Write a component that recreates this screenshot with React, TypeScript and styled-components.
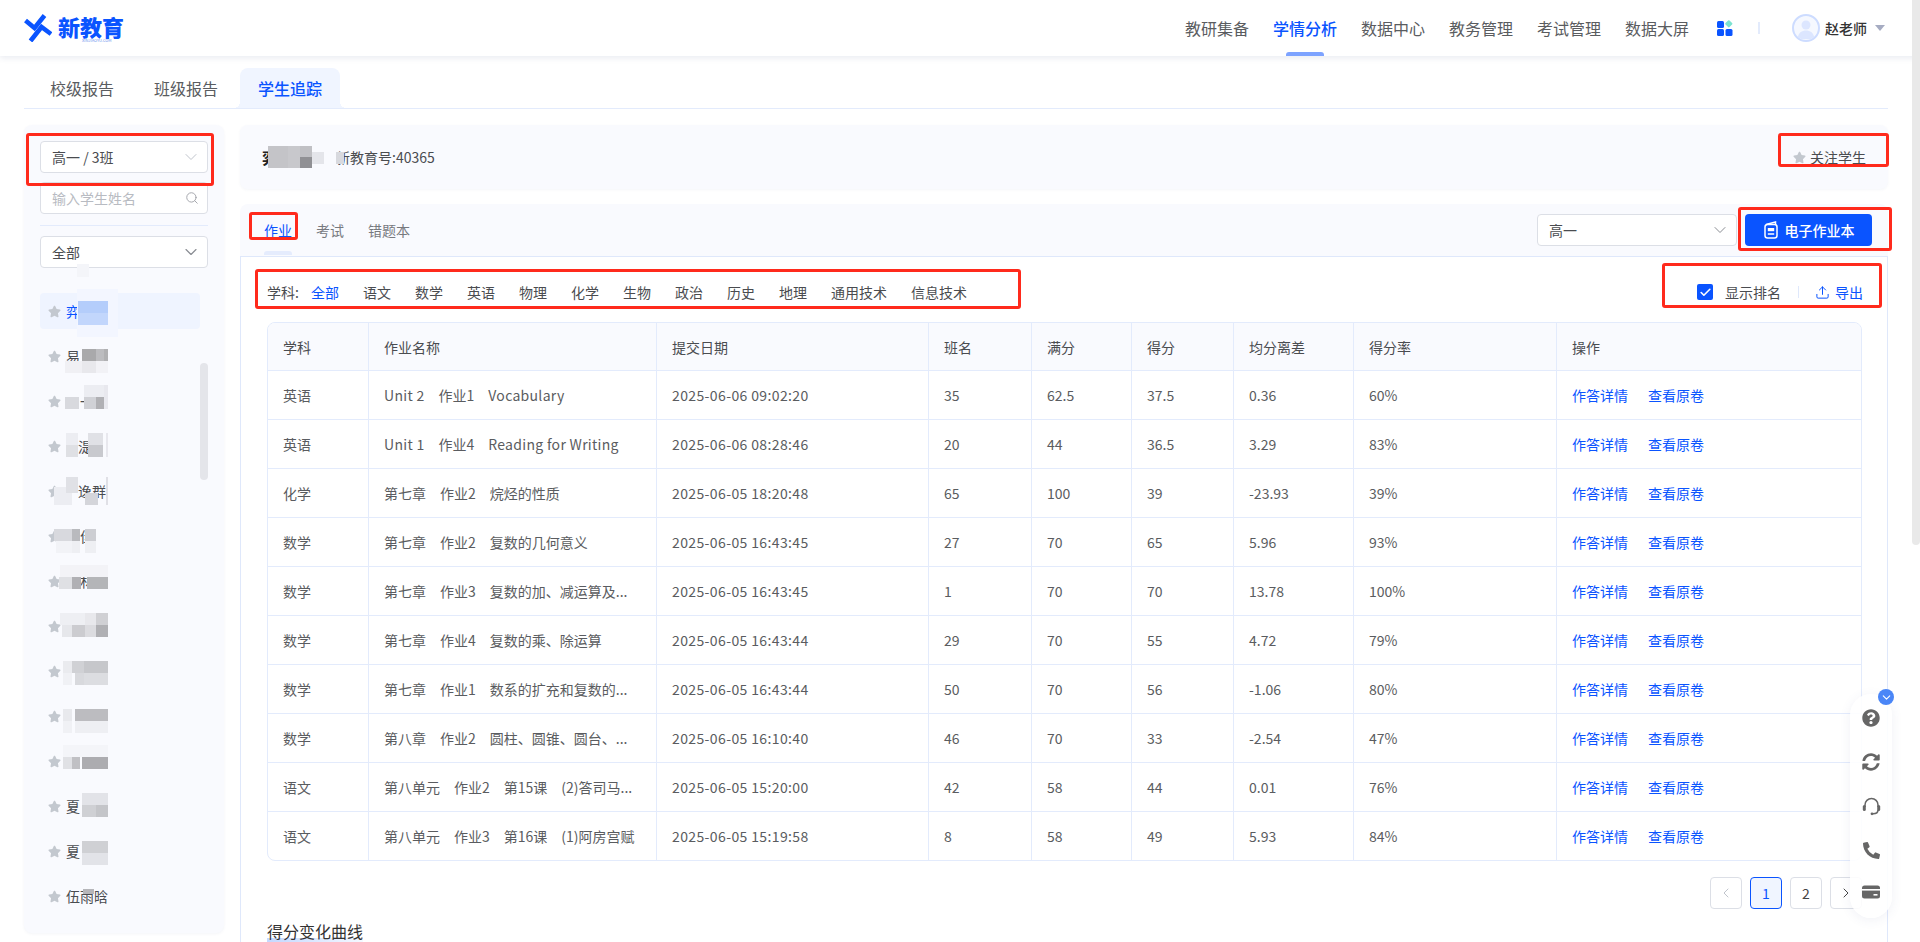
import React from 'react';
import styled, { createGlobalStyle } from 'styled-components';
import { Check, ChevronDown, ChevronLeft, ChevronRight, Search, Upload } from 'lucide-react';
import { FaPhoneAlt, FaQuestionCircle, FaStar, FaSyncAlt } from 'react-icons/fa';

const BLUE = '#0a54ff';
const LINE = '#e3ebfc';
const PANEL = '#f9fafe';
const TEXT = '#5a5c60';

const GlobalStyle = createGlobalStyle`
	html, body {
		margin: 0;
		padding: 0;
		height: 942px;
		overflow: hidden;
		background: #fff;
		font-family: "Noto Sans CJK SC", "Noto Sans", sans-serif;
		font-size: 14px;
		color: ${TEXT};
	}
	* {
		box-sizing: border-box;
	}
`;

const Page = styled.div`
	position: relative;
	width: 1920px;
	height: 942px;
	overflow: hidden;
`;

const Header = styled.header`
	display: flex;
	align-items: center;
	height: 56px;
	padding: 0 35px 0 24px;
	background: #fff;
	box-shadow: 0 2px 6px rgba(40, 60, 120, 0.1);
`;

const Logo = styled.div`
	position: relative;
	display: flex;
	align-items: center;
	gap: 6px;
	height: 56px;
`;

const LogoWord = styled.span`
	margin-bottom: 4px;
	font-size: 22px;
	font-weight: 900;
	line-height: 22px;
	color: ${BLUE};
`;

const LogoSmall = styled.span`
	position: absolute;
	left: 58px;
	top: 38px;
	font-size: 4px;
	line-height: 4px;
	color: #6d93ee;
	white-space: nowrap;
`;

const Nav = styled.nav`
	display: flex;
	align-items: center;
	gap: 24px;
	margin-left: auto;
	height: 56px;
`;

const NavItem = styled.a<{ $active?: boolean }>`
	position: relative;
	display: flex;
	align-items: center;
	height: 56px;
	font-size: 16px;
	font-weight: ${(p) => (p.$active ? 500 : 400)};
	color: ${(p) => (p.$active ? BLUE : TEXT)};

	&::after {
		content: '';
		display: ${(p) => (p.$active ? 'block' : 'none')};
		position: absolute;
		left: 13px;
		bottom: 0;
		width: 38px;
		height: 4px;
		border-radius: 3px 3px 0 0;
		background: #7da3ff;
	}
`;

const HeaderRight = styled.div`
	display: flex;
	align-items: center;
	margin-left: 28px;
`;

const HeaderDivider = styled.span`
	width: 2px;
	height: 12px;
	margin: 0 32px 0 25px;
	background: ${LINE};
`;

const Avatar = styled.span`
	display: flex;
	align-items: center;
	justify-content: center;
	width: 28px;
	height: 28px;
	border-radius: 50%;
	border: 2px solid #cddcff;
	background: #f5f8ff;
	overflow: hidden;
`;

const UserName = styled.span`
	margin-left: 5px;
	font-weight: 500;
	font-size: 14px;
	color: #333;
`;

const Caret = styled.span`
	width: 0;
	height: 0;
	margin-left: 8px;
	border-left: 5px solid transparent;
	border-right: 5px solid transparent;
	border-top: 6px solid #a6acc2;
`;

const Main = styled.main`
	padding: 0 32px 0 24px;
`;

const ReportTabs = styled.div`
	display: flex;
	gap: 4px;
	height: 53px;
	padding: 12px 0 0 8px;
	border-bottom: 1px solid ${LINE};
`;

const ReportTab = styled.a<{ $active?: boolean }>`
	position: relative;
	display: flex;
	align-items: center;
	justify-content: center;
	width: 100px;
	height: 40px;
	font-size: 16px;
	border-radius: 8px 8px 0 0;
	color: ${(p) => (p.$active ? BLUE : TEXT)};
	font-weight: ${(p) => (p.$active ? 500 : 400)};
	background: ${(p) => (p.$active ? '#f0f5ff' : 'transparent')};

	&::before,
	&::after {
		content: '';
		display: ${(p) => (p.$active ? 'block' : 'none')};
		position: absolute;
		bottom: 0;
		width: 6px;
		height: 6px;
	}

	&::before {
		left: -6px;
		background: radial-gradient(circle at 0 0, transparent 6px, #f0f5ff 6px);
	}

	&::after {
		right: -6px;
		background: radial-gradient(circle at 100% 0, transparent 6px, #f0f5ff 6px);
	}
`;

const Body = styled.div`
	display: flex;
	gap: 16px;
	margin-top: 16px;
`;

const Sidebar = styled.aside`
	position: relative;
	flex: 0 0 200px;
	min-width: 0;
	height: 808px;
	padding: 16px;
	border-radius: 8px;
	background: ${PANEL};
	box-shadow: 0 1px 3px rgba(60, 80, 140, 0.06);
`;

const Select = styled.div<{ $w?: number; $muted?: boolean }>`
	display: flex;
	align-items: center;
	justify-content: space-between;
	width: ${(p) => (p.$w ? `${p.$w}px` : '100%')};
	height: 32px;
	padding: 0 6px 0 11px;
	background: #fff;
	border: 1px solid #dcdfe6;
	border-radius: 4px;
	color: #4a4c50;

	svg {
		color: ${(p) => (p.$muted ? '#c0c4cc' : '#8a8d93')};
	}
`;

const SearchBox = styled.label`
	display: flex;
	align-items: center;
	height: 32px;
	margin-top: 9px;
	padding: 0 8px 0 11px;
	background: #fff;
	border: 1px solid #dcdfe6;
	border-radius: 4px;

	svg {
		color: #9a9da3;
		flex: none;
	}
`;

const SearchInput = styled.input`
	flex: 1;
	width: 0;
	min-width: 0;
	border: 0;
	outline: 0;
	padding: 0;
	font: inherit;
	background: transparent;

	&::placeholder {
		color: #b8bbc2;
	}
`;

const SideDivider = styled.div`
	height: 1px;
	margin: 11px 0 10px;
	background: ${LINE};
`;

const StudentList = styled.ul`
	list-style: none;
	margin: 25px 0 0;
	padding: 0;
	width: 160px;
`;

const StudentRow = styled.li<{ $active?: boolean }>`
	position: relative;
	display: flex;
	align-items: center;
	height: 36px;
	margin-bottom: 9px;
	padding-left: 8px;
	border-radius: 4px;
	color: ${(p) => (p.$active ? BLUE : '#4a4c50')};
	background: ${(p) => (p.$active ? '#eff4ff' : 'transparent')};

	> svg {
		flex: none;
		color: #c3c8cf;
	}
`;

const StudentName = styled.span<{ $indent?: number }>`
	margin-left: ${(p) => 5 + (p.$indent ?? 0)}px;
`;

const Mosaic = styled.i<{ $l: number; $t: number; $w: number; $h: number; $c: string }>`
	position: absolute;
	left: ${(p) => p.$l}px;
	top: ${(p) => p.$t}px;
	width: ${(p) => p.$w}px;
	height: ${(p) => p.$h}px;
	background: ${(p) => p.$c};
`;

const ListScroll = styled.div`
	position: absolute;
	left: 176px;
	top: 238px;
	width: 8px;
	height: 117px;
	border-radius: 4px;
	background: #e4e5ea;
`;

const Content = styled.section`
	flex: 1;
	min-width: 0;
`;

const StudentPanel = styled.div`
	position: relative;
	display: flex;
	align-items: center;
	height: 64px;
	padding: 0 22px;
	border-radius: 8px;
	background: ${PANEL};
	box-shadow: 0 1px 3px rgba(60, 80, 140, 0.05);
`;

const PanelName = styled.strong`
	font-size: 16px;
	font-weight: 700;
	color: #222;
`;

const PanelNo = styled.span`
	margin-left: 58px;
	color: #4a4c50;
`;

const Follow = styled.span`
	display: flex;
	align-items: center;
	gap: 4px;
	margin-left: auto;
	color: #4a4c50;

	svg {
		color: #c3c8cf;
	}
`;

const ToolBar = styled.div`
	display: flex;
	align-items: center;
	height: 52px;
	margin-top: 15px;
	padding: 0 16px 0 24px;
	border-radius: 8px 8px 0 0;
	background: ${PANEL};
`;

const RecordTab = styled.a<{ $active?: boolean }>`
	position: relative;
	margin-right: 24px;
	color: ${(p) => (p.$active ? BLUE : '#77797e')};

	&::after {
		content: '';
		display: ${(p) => (p.$active ? 'block' : 'none')};
		position: absolute;
		left: 0;
		right: 0;
		bottom: -15px;
		height: 4px;
		border-radius: 3px 3px 0 0;
		background: #e5ecfd;
	}
`;

const ToolRight = styled.div`
	display: flex;
	align-items: center;
	gap: 8px;
	margin-left: auto;
`;

const PrimaryButton = styled.button`
	display: flex;
	align-items: center;
	justify-content: center;
	gap: 6px;
	width: 127px;
	height: 32px;
	padding: 0;
	border: 0;
	border-radius: 4px;
	font: inherit;
	font-weight: 500;
	color: #fff;
	background: ${BLUE};
`;

const Box = styled.div`
	height: 700px;
	padding: 0 25px 0 26px;
	background: #fff;
	border: 1px solid #dfe8fb;
`;

const FilterBar = styled.div`
	display: flex;
	align-items: center;
	height: 65px;
	padding-top: 5px;
`;

const FilterLabel = styled.span`
	margin-right: 12px;
	color: #4a4c50;
`;

const FilterItem = styled.a<{ $active?: boolean }>`
	margin-right: 24px;
	color: ${(p) => (p.$active ? BLUE : '#4a4c50')};
`;

const FilterRight = styled.div`
	display: flex;
	align-items: center;
	margin-left: auto;
	margin-right: -1px;
`;

const CheckBox = styled.span`
	display: flex;
	align-items: center;
	justify-content: center;
	width: 16px;
	height: 16px;
	border-radius: 2px;
	background: ${BLUE};
	color: #fff;
`;

const CheckLabel = styled.span`
	margin-left: 12px;
	color: #4a4c50;
`;

const FilterDivider = styled.span`
	width: 1px;
	height: 12px;
	margin: 0 16px 0 17px;
	background: #dfe8fb;
`;

const ExportLink = styled.a`
	display: flex;
	align-items: center;
	gap: 5px;
	color: ${BLUE};
`;

const TableWrap = styled.div`
	border: 1px solid ${LINE};
	border-radius: 8px;
	overflow: hidden;
`;

const Table = styled.table`
	width: 100%;
	table-layout: fixed;
	border-collapse: separate;
	border-spacing: 0;
`;

const HeadCell = styled.th`
	height: 48px;
	padding: 0 0 0 15px;
	text-align: left;
	font-weight: 400;
	background: ${PANEL};
	color: #4a4c50;
	border-bottom: 1px solid ${LINE};
	border-right: 1px solid ${LINE};

	&:last-child {
		border-right: 0;
	}
`;

const Cell = styled.td<{ $spaced?: boolean }>`
	height: 49px;
	padding: 0 0 0 15px;
	white-space: nowrap;
	overflow: hidden;
	color: ${TEXT};
	letter-spacing: ${(p) => (p.$spaced ? '0.38px' : 'normal')};
	border-bottom: 1px solid ${LINE};
	border-right: 1px solid ${LINE};

	tr:last-child > & {
		height: 48px;
		border-bottom: 0;
	}

	&:last-child {
		border-right: 0;
	}
`;

const TitlePart = styled.span<{ $latin?: boolean }>`
	margin-right: 14px;
	letter-spacing: ${(p) => (p.$latin ? '0.3px' : 'normal')};
`;

const ActionLink = styled.a`
	margin-right: 20px;
	color: ${BLUE};
`;

const Pager = styled.div`
	display: flex;
	justify-content: flex-end;
	gap: 8px;
	margin-top: 16px;
`;

const PageButton = styled.span<{ $active?: boolean; $disabled?: boolean }>`
	display: flex;
	align-items: center;
	justify-content: center;
	width: 32px;
	height: 32px;
	border-radius: 4px;
	border: 1px solid ${(p) => (p.$active ? BLUE : '#dcdfe6')};
	background: ${(p) => (p.$active ? '#f0f5ff' : '#fff')};
	color: ${(p) => (p.$active ? BLUE : p.$disabled ? '#c0c4cc' : '#444')};
`;

const CurveTitle = styled.h3`
	position: relative;
	display: inline-block;
	margin: 10px 0 0;
	font-size: 16px;
	font-weight: 400;
	line-height: 24px;
	color: #333;
	background: linear-gradient(90deg, #c4d8ff, #f4f8ff) no-repeat 0 100% / 100% 8px;
	padding-bottom: 3px;
`;

const SideScrollbar = styled.div`
	position: absolute;
	right: 0;
	top: 0;
	width: 8px;
	height: 545px;
	border-radius: 0 0 4px 4px;
	background: #e9e9e9;
`;

const FloatBar = styled.div`
	position: absolute;
	left: 1850px;
	top: 694px;
	display: flex;
	flex-direction: column;
	align-items: center;
	gap: 26px;
	width: 42px;
	height: 224px;
	padding-top: 15px;
	border-radius: 21px;
	background: rgba(255, 255, 255, 0.88);
	box-shadow: 0 2px 12px rgba(60, 80, 140, 0.08);
	color: #666;
`;

const FloatBadge = styled.span`
	position: absolute;
	right: -2px;
	top: -5px;
	display: flex;
	align-items: center;
	justify-content: center;
	width: 16px;
	height: 16px;
	border-radius: 50%;
	background: #4a86f7;
	color: #fff;
`;

const Annotation = styled.div<{ $l: number; $t: number; $w: number; $h: number }>`
	position: absolute;
	left: ${(p) => p.$l}px;
	top: ${(p) => p.$t}px;
	width: ${(p) => p.$w}px;
	height: ${(p) => p.$h}px;
	border: 3px solid #ff2a1c;
	border-radius: 3px;
	pointer-events: none;
`;

type Tile = [number, number, number, number, string];

// page coordinates of the blurred patches, per list row: x0, x1, y0, y1, colour
const students: { name: string; indent?: number; tiles: Tile[] }[] = [
	{
		name: '弈',
		tiles: [
			[77, 89, 263, 276, '#f4f5f9'],
			[77, 118, 288, 336, '#f3f6ff'],
			[78, 108, 300, 312, '#b4cdfb'],
			[78, 108, 312, 324, '#c2d6fc']
		]
	},
	{
		name: '易',
		tiles: [
			[82, 96, 348, 360, '#a9a9ab'],
			[96, 104, 348, 360, '#bcbcbf'],
			[104, 108, 348, 360, '#b0b0b2'],
			[65, 82, 360, 372, '#f0f0f4'],
			[82, 96, 360, 372, '#e8e8ec'],
			[96, 108, 360, 372, '#f2f2f6']
		]
	},
	{
		name: '一',
		indent: 14,
		tiles: [
			[84, 104, 384, 396, '#ecedf2'],
			[65, 79, 396, 408, '#d8d9de'],
			[84, 96, 396, 408, '#d0d1d6'],
			[96, 104, 396, 408, '#b0b0b4'],
			[104, 108, 384, 408, '#e8e8ee']
		]
	},
	{
		name: '湜',
		indent: 12,
		tiles: [
			[66, 78, 432, 444, '#ecedf2'],
			[66, 78, 444, 456, '#dfe0e4'],
			[88, 103, 432, 444, '#e0e1e6'],
			[88, 103, 444, 456, '#c8c9ce'],
			[106, 108, 432, 456, '#e8e8ee']
		]
	},
	{
		name: '逸群',
		indent: 12,
		tiles: [
			[54, 72, 486, 504, '#ecedf2'],
			[66, 78, 476, 492, '#e0e1e6'],
			[85, 98, 492, 504, '#d4d5da'],
			[106, 108, 476, 504, '#e0e0e6']
		]
	},
	{
		name: '佳',
		indent: 14,
		tiles: [
			[54, 72, 528, 540, '#d8d9de'],
			[72, 80, 528, 540, '#b9babe'],
			[85, 96, 528, 540, '#cdced3'],
			[56, 72, 540, 552, '#f2f3f7'],
			[72, 80, 540, 552, '#eeeff3'],
			[85, 96, 540, 552, '#eeeff3']
		]
	},
	{
		name: '林',
		indent: 14,
		tiles: [
			[60, 108, 564, 576, '#f3f3f7'],
			[59, 72, 576, 588, '#dfe0e4'],
			[72, 81, 576, 588, '#b0b0b4'],
			[87, 108, 576, 588, '#b4b5b8']
		]
	},
	{
		name: '',
		tiles: [
			[60, 85, 612, 624, '#eeeff3'],
			[85, 96, 612, 624, '#e8e8ec'],
			[96, 108, 612, 624, '#d0d0d4'],
			[62, 72, 624, 636, '#e6e7eb'],
			[72, 85, 624, 636, '#ccccd0'],
			[85, 96, 624, 636, '#dcdce0'],
			[96, 108, 624, 636, '#b0b0b4']
		]
	},
	{
		name: '',
		tiles: [
			[63, 72, 660, 672, '#eaebef'],
			[72, 84, 660, 672, '#d0d1d5'],
			[84, 108, 660, 672, '#c6c7cb'],
			[63, 72, 672, 684, '#f0f1f5'],
			[75, 84, 672, 684, '#d8d9dd'],
			[84, 108, 672, 684, '#dcdde1']
		]
	},
	{
		name: '',
		tiles: [
			[63, 72, 708, 720, '#e8e9ed'],
			[75, 108, 708, 720, '#bcbcc0'],
			[63, 72, 720, 732, '#f0f1f5'],
			[75, 108, 720, 732, '#eeeff3']
		]
	},
	{
		name: '',
		tiles: [
			[63, 108, 744, 756, '#f4f5f9'],
			[63, 72, 756, 768, '#e0e1e5'],
			[72, 80, 756, 768, '#c0c0c4'],
			[82, 108, 756, 768, '#acacb0']
		]
	},
	{
		name: '夏',
		tiles: [
			[82, 108, 792, 804, '#e2e3e8'],
			[82, 96, 804, 816, '#cfd0d4'],
			[96, 108, 804, 816, '#c4c5c9']
		]
	},
	{
		name: '夏',
		tiles: [
			[82, 108, 840, 852, '#cfd0d4'],
			[82, 108, 852, 864, '#e2e3e8']
		]
	},
	{ name: '伍雨晗', tiles: [[83, 94, 888, 893, '#b6b6ba']] }
];

const subjects = ['语文', '数学', '英语', '物理', '化学', '生物', '政治', '历史', '地理', '通用技术', '信息技术'];
const columns = ['学科', '作业名称', '提交日期', '班名', '满分', '得分', '均分离差', '得分率', '操作'];
const colWidths = [101, 288, 272, 103, 100, 102, 120, 203, 306];

const homework = [
	['英语', ['Unit 2', '作业1', 'Vocabulary'], '2025-06-06 09:02:20', '35', '62.5', '37.5', '0.36', '60%'],
	['英语', ['Unit 1', '作业4', 'Reading for Writing'], '2025-06-06 08:28:46', '20', '44', '36.5', '3.29', '83%'],
	['化学', ['第七章', '作业2', '烷烃的性质'], '2025-06-05 18:20:48', '65', '100', '39', '-23.93', '39%'],
	['数学', ['第七章', '作业2', '复数的几何意义'], '2025-06-05 16:43:45', '27', '70', '65', '5.96', '93%'],
	['数学', ['第七章', '作业3', '复数的加、减运算及...'], '2025-06-05 16:43:45', '1', '70', '70', '13.78', '100%'],
	['数学', ['第七章', '作业4', '复数的乘、除运算'], '2025-06-05 16:43:44', '29', '70', '55', '4.72', '79%'],
	['数学', ['第七章', '作业1', '数系的扩充和复数的...'], '2025-06-05 16:43:44', '50', '70', '56', '-1.06', '80%'],
	['数学', ['第八章', '作业2', '圆柱、圆锥、圆台、...'], '2025-06-05 16:10:40', '46', '70', '33', '-2.54', '47%'],
	['语文', ['第八单元', '作业2', '第15课', '(2)答司马...'], '2025-06-05 15:20:00', '42', '58', '44', '0.01', '76%'],
	['语文', ['第八单元', '作业3', '第16课', '(1)阿房宫赋'], '2025-06-05 15:19:58', '8', '58', '49', '5.93', '84%']
] as [string, string[], string, string, string, string, string, string][];

const LogoMark = () => (
	<svg width="28" height="28" viewBox="0 0 28 28" fill="none" stroke={BLUE} strokeWidth="4.6">
		<path d="M1.5 6.5 L10.5 14 L20.5 1.5" />
		<path d="M6.5 27 L17.5 13 L27 20" />
	</svg>
);

const AppsIcon = () => (
	<svg width="16" height="16" viewBox="0 0 16 16">
		<rect x="0" y="1" width="7" height="7" rx="1.5" fill={BLUE} />
		<rect x="0" y="9" width="7" height="7" rx="1.5" fill={BLUE} />
		<rect x="8.5" y="9" width="7" height="7" rx="1.5" fill={BLUE} />
		<rect x="9" y="1" width="5.6" height="5.6" rx="1" fill="#7de3d0" transform="rotate(45 11.8 3.8)" />
	</svg>
);

const PersonIcon = () => (
	<svg width="24" height="24" viewBox="0 0 24 24" fill="#dce6ff">
		<circle cx="12" cy="9" r="4.5" />
		<path d="M3.5 23 C4 16.5 8 14.5 12 14.5 C16 14.5 20 16.5 20.5 23 Z" />
	</svg>
);

const BookIcon = () => (
	<svg width="16" height="18" viewBox="0 0 16 18" fill="none" stroke="#fff" strokeWidth="1.5">
		<path d="M3 3.5 L12.5 1 V3.5" />
		<rect x="2" y="3.5" width="12" height="13.5" rx="2.5" />
		<rect x="4.8" y="7" width="6.4" height="3.2" fill="#fff" stroke="none" />
		<path d="M4.8 13 H11.2" />
	</svg>
);

const HeadsetIcon = () => (
	<svg width="19" height="19" viewBox="0 0 19 19" fill="none" stroke="#666" strokeWidth="1.5">
		<path d="M3 10 V8 a6.5 6.5 0 0 1 13 0 V10" />
		<path d="M16 13 C16 15.5 14 16.8 11 16.8" />
		<rect x="0.8" y="8" width="3" height="6" rx="1.5" fill="#666" stroke="none" />
		<rect x="15.2" y="8" width="3" height="6" rx="1.5" fill="#666" stroke="none" />
		<circle cx="10" cy="16.8" r="1.4" fill="#666" stroke="none" />
	</svg>
);

const CardIcon = () => (
	<svg width="18" height="14" viewBox="0 0 18 14">
		<rect x="0" y="0.5" width="18" height="13" rx="2.5" fill="#666" />
		<rect x="0" y="4" width="18" height="1.6" fill="#fff" />
		<rect x="11.5" y="9" width="4" height="1.6" fill="#fff" />
	</svg>
);

const App = () => (
	<Page>
		<GlobalStyle />
		<Header>
			<Logo>
				<LogoMark />
				<LogoWord>新教育</LogoWord>
				<LogoSmall>XINJIAOYU.COM</LogoSmall>
			</Logo>
			<Nav>
				<NavItem>教研集备</NavItem>
				<NavItem $active>学情分析</NavItem>
				<NavItem>数据中心</NavItem>
				<NavItem>教务管理</NavItem>
				<NavItem>考试管理</NavItem>
				<NavItem>数据大屏</NavItem>
			</Nav>
			<HeaderRight>
				<AppsIcon />
				<HeaderDivider />
				<Avatar>
					<PersonIcon />
				</Avatar>
				<UserName>赵老师</UserName>
				<Caret />
			</HeaderRight>
		</Header>
		<Main>
			<ReportTabs>
				<ReportTab>校级报告</ReportTab>
				<ReportTab>班级报告</ReportTab>
				<ReportTab $active>学生追踪</ReportTab>
			</ReportTabs>
			<Body>
				<Sidebar>
					<Select $muted>
						高一 / 3班
						<ChevronDown size={20} strokeWidth={1.2} />
					</Select>
					<SearchBox>
						<SearchInput placeholder="输入学生姓名" />
						<Search size={14} strokeWidth={1.5} />
					</SearchBox>
					<SideDivider />
					<Select>
						全部
						<ChevronDown size={20} strokeWidth={1.4} />
					</Select>
					<StudentList>
						{students.map((s, i) => (
							<StudentRow key={i} $active={i === 0}>
								<FaStar size={13} />
								<StudentName $indent={s.indent}>{s.name}</StudentName>
								{s.tiles.map(([x0, x1, y0, y1, c], j) => (
									<Mosaic key={j} $l={x0 - 40} $t={y0 - (292 + 45 * i)} $w={x1 - x0} $h={y1 - y0} $c={c} />
								))}
							</StudentRow>
						))}
					</StudentList>
					<ListScroll />
				</Sidebar>
				<Content>
					<StudentPanel>
						<PanelName>弈</PanelName>
						<Mosaic $l={28} $t={21} $w={20} $h={22} $c="#c4c4c8" />
						<Mosaic $l={48} $t={21} $w={12} $h={22} $c="#c8c8cc" />
						<Mosaic $l={60} $t={21} $w={12} $h={11} $c="#c0c0c4" />
						<Mosaic $l={60} $t={32} $w={12} $h={11} $c="#909094" />
						<Mosaic $l={72} $t={27} $w={12} $h={12} $c="#e4e5ea" />
						<PanelNo>新教育号:40365</PanelNo>
						<Mosaic $l={96} $t={27} $w={8} $h={12} $c="#d8d9de" />
						<Follow>
							<FaStar size={13} />
							关注学生
						</Follow>
					</StudentPanel>
					<ToolBar>
						<RecordTab $active>作业</RecordTab>
						<RecordTab>考试</RecordTab>
						<RecordTab>错题本</RecordTab>
						<ToolRight>
							<Select $w={200}>
								高一
								<ChevronDown size={20} strokeWidth={1.2} />
							</Select>
							<PrimaryButton>
								<BookIcon />
								电子作业本
							</PrimaryButton>
						</ToolRight>
					</ToolBar>
					<Box>
						<FilterBar>
							<FilterLabel>学科:</FilterLabel>
							<FilterItem $active>全部</FilterItem>
							{subjects.map((s) => (
								<FilterItem key={s}>{s}</FilterItem>
							))}
							<FilterRight>
								<CheckBox>
									<Check size={13} strokeWidth={3} />
								</CheckBox>
								<CheckLabel>显示排名</CheckLabel>
								<FilterDivider />
								<ExportLink>
									<Upload size={15} strokeWidth={1.6} />
									导出
								</ExportLink>
							</FilterRight>
						</FilterBar>
						<TableWrap>
							<Table>
								<colgroup>
									{colWidths.map((w, i) => (
										<col key={i} width={w} />
									))}
								</colgroup>
								<thead>
									<tr>
										{columns.map((c) => (
											<HeadCell key={c}>{c}</HeadCell>
										))}
									</tr>
								</thead>
								<tbody>
									{homework.map(([subject, title, ...rest], i) => (
										<tr key={i}>
											<Cell>{subject}</Cell>
											<Cell>
												{title.map((t) => (
													<TitlePart key={t} $latin={/^[\x20-\x7f]+$/.test(t)}>
														{t}
													</TitlePart>
												))}
											</Cell>
											{rest.map((v, j) => (
												<Cell key={j} $spaced={j === 0}>
													{v}
												</Cell>
											))}
											<Cell>
												<ActionLink>作答详情</ActionLink>
												<ActionLink>查看原卷</ActionLink>
											</Cell>
										</tr>
									))}
								</tbody>
							</Table>
						</TableWrap>
						<Pager>
							<PageButton $disabled>
								<ChevronLeft size={16} strokeWidth={1.5} />
							</PageButton>
							<PageButton $active>1</PageButton>
							<PageButton>2</PageButton>
							<PageButton>
								<ChevronRight size={16} strokeWidth={1.5} />
							</PageButton>
						</Pager>
						<CurveTitle>得分变化曲线</CurveTitle>
					</Box>
				</Content>
			</Body>
		</Main>
		<SideScrollbar />
		<FloatBar>
			<FloatBadge>
				<ChevronDown size={13} strokeWidth={2} />
			</FloatBadge>
			<FaQuestionCircle size={18} />
			<FaSyncAlt size={18} />
			<HeadsetIcon />
			<FaPhoneAlt size={17} />
			<CardIcon />
		</FloatBar>
		<Annotation $l={26} $t={133} $w={188} $h={53} />
		<Annotation $l={249} $t={212} $w={49} $h={28} />
		<Annotation $l={1778} $t={133} $w={111} $h={34} />
		<Annotation $l={1738} $t={207} $w={154} $h={44} />
		<Annotation $l={1662} $t={263} $w={220} $h={45} />
		<Annotation $l={255} $t={269} $w={766} $h={40} />
	</Page>
);

export default App;
